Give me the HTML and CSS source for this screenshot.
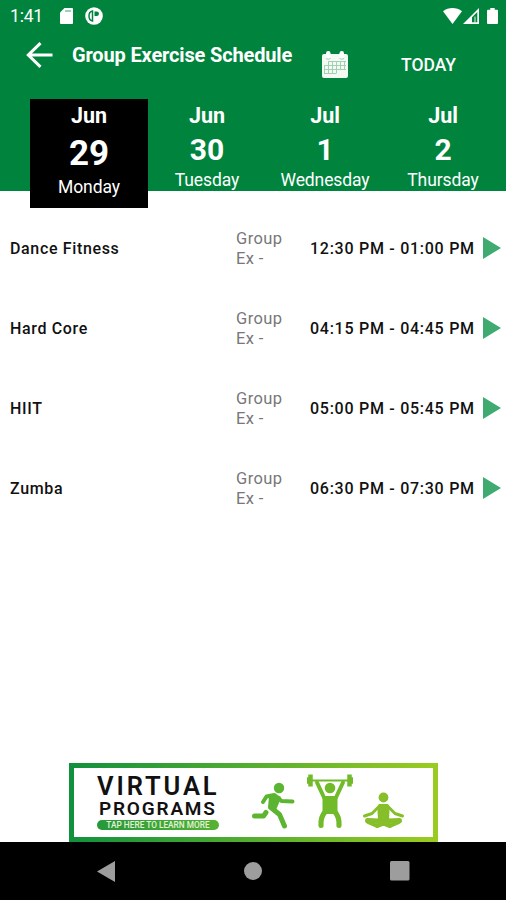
FILE: index.html
```
<!DOCTYPE html>
<html lang="en">
  <head>
    <meta charset="UTF-8" />
    <meta name="viewport" content="width=device-width, initial-scale=1.0" />
    <title>Group Exercise Schedule</title>
    <link rel="stylesheet" href="styles.css">
  </head>
  <body>
    <header class="header">
      <!-- status bar -->
      <div class="status-bar">
        <span class="clock">1:41</span>
        <svg class="sd-icon" width="13" height="16" viewBox="0 0 13 16">
          <path fill="#fff" d="M4.5 0H12a1 1 0 0 1 1 1v14a1 1 0 0 1-1 1H1a1 1 0 0 1-1-1V4.5z" />
          <path stroke="#00843d" stroke-width="1.5" opacity=".5" d="M5 3h6" />
        </svg>
        <svg class="app-icon" width="18" height="18" viewBox="0 0 18 18">
          <circle cx="9" cy="9" r="8.8" fill="#fff" />
          <path fill="none" stroke="#00843d" stroke-width="1.5" d="M7.500 4C5 4.500 4 6.500 4 9s1 4.500 3.500 5z" />
          <path fill="#00843d" d="M9.500 4.500h2.200a2.200 2.200 0 0 1 0 4.500H9.500z" />
        </svg>
        <div class="status-right">
          <svg width="19" height="16" viewBox="0 0 19 16">
            <path fill="#fff" d="M0 3.200C5.500-1 13.500-1 19 3.200L9.500 16z" />
          </svg>
          <svg width="16" height="16" viewBox="0 0 16 16">
            <path fill="#fff" fill-rule="evenodd" d="M16 0v16H0zM14.300 4L9 9.300V14.300h5.300z" />
            <path fill="#fff" d="M11 8.500h2v6h-2z" opacity=".45" />
          </svg>
          <svg class="battery" width="11" height="16" viewBox="0 0 11 16">
            <path fill="#fff" d="M3.300 0h4.400v1.700H10a1 1 0 0 1 1 1V15a1 1 0 0 1-1 1H1a1 1 0 0 1-1-1V2.700a1 1 0 0 1 1-1h2.300z" />
          </svg>
        </div>
      </div>

      <!-- title bar -->
      <div class="title-bar">
        <svg class="back" width="27" height="26" viewBox="0 0 27 26">
          <path fill="none" stroke="#fff" stroke-width="3" d="M26.500 13H2.500M14.500 1.200L2.300 13l12.200 11.800" />
        </svg>
        <h1>Group Exercise Schedule</h1>
        <svg class="calendar" width="26" height="27" viewBox="0 0 26 27">
          <path fill="#f3faf4" d="M2 3h22a2 2 0 0 1 2 2v20a2 2 0 0 1-2 2H2a2 2 0 0 1-2-2V5a2 2 0 0 1 2-2z" />
          <rect x="4" y="0" width="4.500" height="7.500" rx="2.200" fill="#fff" />
          <rect x="17.500" y="0" width="4.500" height="7.500" rx="2.200" fill="#fff" />
          <path fill="none" stroke="#8fc7a4" stroke-width=".8" d="M4 7.500q2.200 1.500 4.500 0M17.500 7.500q2.200 1.500 4.500 0" />
          <path stroke="#a3d0b3" stroke-width="1" d="M6 10.500h18M2 14.500h22M2 18.500h22M2 22.500h12M2.500 14v9M6.500 10.500v12M10.500 10.500v12M14.500 10.500v12M18.500 10.500v8M22.500 10.500v8" />
        </svg>
        <span class="today">TODAY</span>
      </div>

      <!-- day picker -->
      <div class="days">
        <div class="day active">
          <span class="month">Jun</span>
          <span class="number">29</span>
          <span class="weekday">Monday</span>
        </div>
        <div class="day">
          <span class="month">Jun</span>
          <span class="number">30</span>
          <span class="weekday">Tuesday</span>
        </div>
        <div class="day">
          <span class="month">Jul</span>
          <span class="number">1</span>
          <span class="weekday">Wednesday</span>
        </div>
        <div class="day">
          <span class="month">Jul</span>
          <span class="number">2</span>
          <span class="weekday">Thursday</span>
        </div>
      </div>
    </header>

    <!-- classes of the day -->
    <main class="schedule">
      <div class="row">
        <span class="name">Dance Fitness</span>
        <span class="group">Group Ex -</span>
        <span class="time">12:30 PM - 01:00 PM</span>
        <span class="arrow"></span>
      </div>
      <div class="row">
        <span class="name">Hard Core</span>
        <span class="group">Group Ex -</span>
        <span class="time">04:15 PM - 04:45 PM</span>
        <span class="arrow"></span>
      </div>
      <div class="row">
        <span class="name">HIIT</span>
        <span class="group">Group Ex -</span>
        <span class="time">05:00 PM - 05:45 PM</span>
        <span class="arrow"></span>
      </div>
      <div class="row">
        <span class="name">Zumba</span>
        <span class="group">Group Ex -</span>
        <span class="time">06:30 PM - 07:30 PM</span>
        <span class="arrow"></span>
      </div>
    </main>

    <!-- banner -->
    <div class="banner">
      <div class="banner-text">
        <span class="virtual">VIRTUAL</span>
        <span class="programs">PROGRAMS</span>
        <span class="tap">TAP HERE TO LEARN MORE</span>
      </div>
      <svg class="figures" width="157" height="56" viewBox="0 0 157 56">
        <!-- runner -->
        <g fill="none" stroke="#5cb531" stroke-linecap="round" stroke-linejoin="round">
          <circle cx="29" cy="14" r="5.200" fill="#5cb531" stroke="none" />
          <path stroke-width="4" d="M13 28l3.500-5.500 8-1.500 7 6 11 .5" />
          <path fill="#5cb531" stroke-width="4" d="M21 22.500l8 1.500-5 11.500-4-2z" />
          <path stroke-width="5" d="M21.500 34l8 6.500 5 11.500" />
          <path stroke-width="5" d="M16 38.500l-2.500 3.500H4.500" />
        </g>
        <!-- weight lifter -->
        <g fill="none" stroke="#71bb2b" stroke-linecap="round" stroke-linejoin="round">
          <circle cx="80" cy="14" r="5.300" fill="#71bb2b" stroke="none" />
          <path stroke-width="2.200" d="M59 6.500h42" />
          <path stroke-width="4.500" stroke-linecap="butt" d="M60.500 .5v12M99.500 .5v12" />
          <path stroke-width="2" d="M58 4v5M102 4v5" />
          <path stroke-width="4" d="M67 8.500l7 15M93 8.500l-7 15" />
          <path fill="#71bb2b" stroke-width="3" d="M74 23.500h12v15H74z" />
          <path stroke-width="5.200" d="M75 38q-4.500 5-4 13.500M85 38q4.500 5 4 13.500" />
        </g>
        <!-- yoga -->
        <g fill="none" stroke="#86bf29" stroke-linecap="round" stroke-linejoin="round">
          <circle cx="133.500" cy="23.500" r="4.900" fill="#86bf29" stroke="none" />
          <path fill="#86bf29" stroke-width="2" d="M129.500 31h8l1 6-.5 9h-9l-.5-9z" />
          <path stroke-width="3" d="M129.500 32l-7.500 7.500-7.500 2.500M137.500 32l7.500 7.500 7.500 2.500" />
          <path stroke-width="5" d="M117.500 46.500l11 .5 11 4.500M149.500 46.500l-11 .5-11 4.500" />
          <path stroke-width="4" d="M118 48l8 3.500M149 48l-8 3.500" />
        </g>
      </svg>
    </div>

    <!-- android navigation -->
    <nav class="nav-bar">
      <svg width="18" height="21" viewBox="0 0 18 21"><path fill="#9d9d9d" d="M18 0v21L0 10.500z" /></svg>
      <svg width="18" height="18" viewBox="0 0 18 18"><circle cx="9" cy="9" r="9" fill="#9d9d9d" /></svg>
      <svg width="20" height="20" viewBox="0 0 20 20"><rect width="19.500" height="19.500" rx="1.500" fill="#9d9d9d" /></svg>
    </nav>
  </body>
</html>
```
FILE: styles.css
```
:root {
  --green: #00843d;
  --arrow: #3fab70;
}

* {
  box-sizing: border-box;
}

body {
  margin: 0;
  width: 506px;
  height: 900px;
  display: flex;
  flex-direction: column;
  overflow: hidden;
  background: #fff;
  font-family: Roboto, "Liberation Sans", sans-serif;
}

svg {
  display: block;
  flex-shrink: 0;
}

/* ------- header */
.header {
  height: 191px;
  flex-shrink: 0;
  background: var(--green);
  color: #fff;
}

.status-bar {
  display: flex;
  align-items: center;
  height: 32px;
  padding: 0 8px 0 10px;
}

.clock {
  width: 50px;
  font-size: 17.5px;
  letter-spacing: -0.2px;
}

.app-icon {
  margin-left: 12px;
}

.status-right {
  display: flex;
  margin-left: auto;
  gap: 1px;
}

.battery {
  margin-left: 7px;
}

/* title bar */
.title-bar {
  display: flex;
  align-items: center;
  height: 67px;
  padding-left: 26px;
}

.back {
  margin-bottom: 21px;
}

h1 {
  width: 250px;
  margin: 0 0 21px 19px;
  font-size: 20px;
  line-height: 24px;
  font-weight: 700;
  letter-spacing: -0.15px;
  white-space: nowrap;
}

.calendar {
  margin-bottom: 2px;
}

.today {
  margin: 0 0 1px 53px;
  font-size: 17.5px;
  font-weight: 500;
}

/* day picker */
.days {
  display: flex;
  align-items: flex-start;
  padding-left: 30px;
}

.day {
  width: 118px;
  flex-shrink: 0;
  display: flex;
  flex-direction: column;
  align-items: center;
}

.day.active {
  height: 109px;
  background: #000;
}

.month {
  margin-top: 5px;
  font-size: 21.5px;
  line-height: 24px;
  font-weight: 700;
}

.number {
  margin-top: 4px;
  font-size: 30px;
  line-height: 36px;
  font-weight: 700;
}

.weekday {
  margin-top: 2px;
  font-size: 17.5px;
  line-height: 21px;
  letter-spacing: -0.1px;
}

.active .number {
  margin-top: 5px;
  font-size: 35px;
  line-height: 42px;
}

/* ------- schedule */
.schedule {
  flex: 1;
  padding-top: 17px;
}

.row {
  display: flex;
  align-items: center;
  height: 80.2px;
  padding-left: 10px;
  color: #111;
}

.name {
  width: 226px;
  font-size: 16px;
  font-weight: 500;
  letter-spacing: 0.65px;
}

.group {
  width: 74px;
  padding: 1px 22px 0 0;
  color: #777;
  font-size: 16.5px;
  line-height: 20px;
  letter-spacing: 0.4px;
}

.time {
  width: 173px;
  font-size: 16px;
  font-weight: 500;
  letter-spacing: 0.73px;
  white-space: nowrap;
}

.arrow {
  margin-bottom: 1px;
  border-left: 18px solid var(--arrow);
  border-top: 11px solid transparent;
  border-bottom: 11px solid transparent;
}

/* ------- banner */
.banner {
  display: flex;
  width: 369px;
  height: 79px;
  flex-shrink: 0;
  margin-left: 69px;
  border: 5px solid;
  border-image: linear-gradient(90deg, #11913e, #9acb20) 1;
}

.banner-text {
  display: flex;
  flex-direction: column;
  width: 122px;
  margin: 6px 0 0 23px;
  color: #111;
  font-weight: 600;
}

.virtual {
  font-size: 25.5px;
  line-height: 24px;
  letter-spacing: 2.9px;
}

.programs {
  margin: 1px 0 0 2px;
  font-size: 19px;
  line-height: 19px;
  letter-spacing: 1.8px;
}

.tap {
  height: 10px;
  margin-top: 2px;
  border-radius: 5px;
  background: linear-gradient(90deg, #27993a, #55b233);
  color: #e4f3dc;
  font-size: 8.3px;
  line-height: 10px;
  font-weight: 500;
  text-align: center;
  white-space: nowrap;
}

.figures {
  margin: 6px 0 0 31px;
}

/* ------- navigation bar */
.nav-bar {
  display: flex;
  align-items: center;
  justify-content: space-between;
  height: 58px;
  flex-shrink: 0;
  padding: 0 96px 0 97px;
  background: #000;
}
```
